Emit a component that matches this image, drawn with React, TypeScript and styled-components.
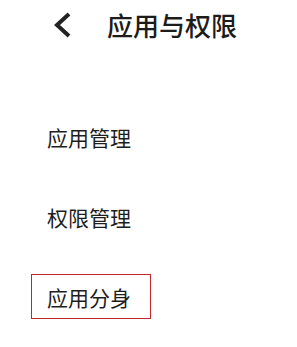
import React from "react";
import styled, { createGlobalStyle } from "styled-components";

const Global = createGlobalStyle`
  html, body { margin: 0; padding: 0; background: #ffffff; }
  body { font-family: "Noto Sans CJK SC", "Noto Sans", sans-serif; color: #1e1e1e; }
`;

const Page = styled.div`
  width: 297px;
  height: 347px;
  background: #ffffff;
  overflow: hidden;
`;

const Header = styled.header`
  display: flex;
  align-items: center;
  height: 50px;
  padding-left: 53px;
`;

const BackIcon = styled.span`
  display: block;
  flex: 0 0 auto;
  width: 18px;
  height: 28px;
  margin-right: 36px;
  cursor: pointer;

  svg {
    display: block;
  }
`;

const Title = styled.h1`
  margin: 0;
  font-size: 26px;
  line-height: 26px;
  font-weight: 500;
  color: #1c1c1c;
`;

const List = styled.ul`
  list-style: none;
  margin: 64px 0 0 31px;
  padding: 0;
  display: flex;
  flex-direction: column;
  align-items: flex-start;
  gap: 35px;
`;

const Item = styled.li<{ $highlight?: boolean }>`
  box-sizing: border-box;
  height: 45px;
  padding: 12px 19px 10px 15px;
  border: 1px solid ${(p) => (p.$highlight ? "#c4262e" : "transparent")};
  font-size: 21px;
  line-height: 21px;
  color: #1e1e1e;
  white-space: nowrap;
`;

const items = ["应用管理", "权限管理", "应用分身"];

export default function App() {
  return (
    <Page>
      <Global />
      <Header>
        <BackIcon role="button" aria-label="返回">
          <svg width="18" height="28" viewBox="0 0 18 28">
            <polyline
              points="16,3 4,14 16,25"
              fill="none"
              stroke="#222222"
              strokeWidth="4"
              strokeLinejoin="miter"
            />
          </svg>
        </BackIcon>
        <Title>应用与权限</Title>
      </Header>
      <List>
        {items.map((t, i) => (
          <Item key={t} $highlight={i === 2}>
            {t}
          </Item>
        ))}
      </List>
    </Page>
  );
}
